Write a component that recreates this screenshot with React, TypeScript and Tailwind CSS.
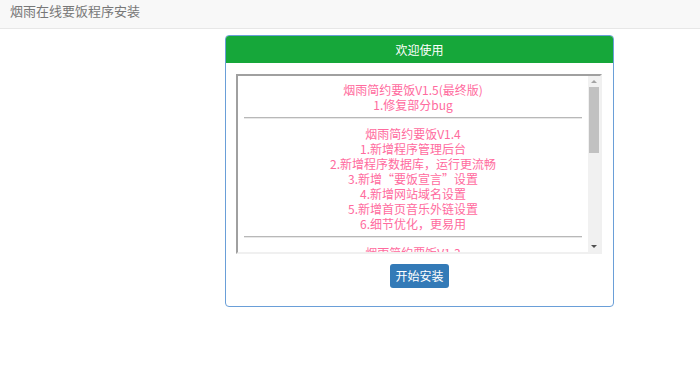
export default function App() {
  const font = { fontFamily: '"Microsoft YaHei", "Noto Sans CJK SC", "Noto Sans", sans-serif' };
  const v14 = [
    "烟雨简约要饭V1.4",
    "1.新增程序管理后台",
    "2.新增程序数据库，运行更流畅",
    "3.新增“要饭宣言”设置",
    "4.新增网站域名设置",
    "5.新增首页音乐外链设置",
    "6.细节优化，更易用",
  ];

  return (
    <div className="w-[700px] h-[389px] bg-white" style={font}>
      <header className="h-[29px] bg-[#f8f8f8] border-b border-[#e7e7e7] flex items-center px-[10px]">
        <span className="text-[13px] text-[#777] leading-none -mt-[8px]">烟雨在线要饭程序安装</span>
      </header>

      <div className="pl-[225px] pt-[6px]">
        <div className="w-[389px] h-[272px] border border-[#6a9fd8] rounded-[4px] overflow-hidden flex flex-col">
          <div className="h-[27px] bg-[#16a73a] flex items-center justify-center text-white text-[12px]">
            欢迎使用
          </div>

          <div className="flex flex-col items-center pt-[11px]">
            <div className="ml-[-1px] w-[366px] h-[180px] border-2 border-t-[#a0a0a0] border-l-[#a0a0a0] border-r-[#f0f0f0] border-b-[#f0f0f0] flex">
              <div className="flex-1 overflow-hidden pt-[6px] text-[12px] leading-[15px] text-[#ff6b9e] text-center">
                <p>烟雨简约要饭V1.5(最终版)</p>
                <p>1.修复部分bug</p>
                <div className="mx-[6px] mt-[5px] mb-[7px] h-[2px] bg-[#b8b8b8] border-b border-[#e8e8e8]" />
                {v14.map((t) => (
                  <p key={t}>{t}</p>
                ))}
                <div className="mx-[6px] mt-[5px] mb-[7px] h-[2px] bg-[#b8b8b8] border-b border-[#e8e8e8]" />
                <p>烟雨简约要饭V1.3</p>
              </div>
              <div className="w-[12px] bg-[#f1f1f1] flex flex-col items-center">
                <div className="h-[11px] flex items-center justify-center">
                  <div className="w-0 h-0 border-l-[3px] border-r-[3px] border-b-[3px] border-l-transparent border-r-transparent border-b-[#a3a3a3]" />
                </div>
                <div className="w-[10px] h-[66px] bg-[#c1c1c1]" />
                <div className="flex-1" />
                <div className="h-[11px] flex items-center justify-center">
                  <div className="w-0 h-0 border-l-[3px] border-r-[3px] border-t-[3px] border-l-transparent border-r-transparent border-t-[#505050]" />
                </div>
              </div>
            </div>

            <button className="mt-[10px] w-[59px] h-[24px] rounded-[3px] bg-[#337ab7] text-white text-[12px] flex items-center justify-center">
              开始安装
            </button>
          </div>
        </div>
      </div>
    </div>
  );
}
